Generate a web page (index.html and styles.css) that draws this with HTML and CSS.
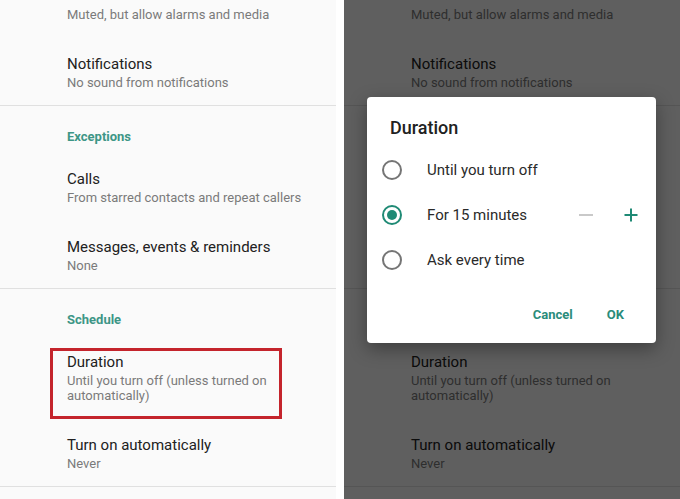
FILE: index.html
```html
<!DOCTYPE html>
<html lang="en">
<head>
<meta charset="utf-8">
<title>Do Not Disturb – Duration</title>
<link rel="stylesheet" href="styles.css">
</head>
<body>
<div class="screen">
  <section class="panel">
    <div class="item item-partial"><div class="sub">Muted, but allow alarms and media</div></div>
    <div class="item"><div class="title">Notifications</div><div class="sub">No sound from notifications</div></div>
    <div class="divider"></div>
    <div class="header">Exceptions</div>
    <div class="item"><div class="title">Calls</div><div class="sub">From starred contacts and repeat callers</div></div>
    <div class="item"><div class="title">Messages, events &amp; reminders</div><div class="sub">None</div></div>
    <div class="divider"></div>
    <div class="header">Schedule</div>
    <div class="item item-marked"><div class="title">Duration</div><div class="sub">Until you turn off (unless turned on automatically)</div></div>
    <div class="item"><div class="title">Turn on automatically</div><div class="sub">Never</div></div>
    <div class="divider"></div>
  </section>

  <section class="panel panel-dimmed">
    <div class="item item-partial"><div class="sub">Muted, but allow alarms and media</div></div>
    <div class="item"><div class="title">Notifications</div><div class="sub">No sound from notifications</div></div>
    <div class="divider"></div>
    <div class="header covered">Exceptions</div>
    <div class="item covered"><div class="title">Calls</div><div class="sub">From starred contacts and repeat callers</div></div>
    <div class="item covered"><div class="title">Messages, events &amp; reminders</div><div class="sub">None</div></div>
    <div class="divider"></div>
    <div class="header covered">Schedule</div>
    <div class="item"><div class="title">Duration</div><div class="sub">Until you turn off (unless turned on automatically)</div></div>
    <div class="item"><div class="title">Turn on automatically</div><div class="sub">Never</div></div>
    <div class="divider"></div>

    <div class="dialog">
      <div class="dialog-title">Duration</div>
      <div class="option"><span class="radio"></span><span class="option-label">Until you turn off</span></div>
      <div class="option"><span class="radio radio-on"></span><span class="option-label">For 15 minutes</span>
        <div class="stepper">
          <svg class="step" viewBox="0 0 24 24" width="24" height="24"><path d="M5 12h14" stroke="#c9c9c9" stroke-width="2" fill="none"/></svg>
          <svg class="step" viewBox="0 0 24 24" width="24" height="24"><path d="M5.5 12h13M12 5.5v13" stroke="#1f8a75" stroke-width="2" fill="none"/></svg>
        </div>
      </div>
      <div class="option"><span class="radio"></span><span class="option-label">Ask every time</span></div>
      <div class="actions"><span class="btn">Cancel</span><span class="btn">OK</span></div>
    </div>
  </section>
</div>
</body>
</html>
```

FILE: styles.css
```css
* { box-sizing: border-box; }

body {
  margin: 0;
  background: #ffffff;
  font-family: Roboto, "Noto Sans", "Liberation Sans", sans-serif;
}

.screen {
  display: flex;
  gap: 8px;
  width: 680px;
  height: 499px;
  overflow: hidden;
}

.panel {
  position: relative;
  width: 336px;
  height: 499px;
  flex: none;
  background: #fafafa;
  overflow: hidden;
}

.item {
  position: relative;
  padding: 16px 24px 15px 67px;
}

.item-partial {
  padding-top: 7px;
  padding-bottom: 15px;
}

.title {
  font-size: 15px;
  line-height: 22px;
  color: #212121;
}

.sub {
  font-size: 13px;
  line-height: 15px;
  color: #7a7a7a;
}

.divider {
  height: 1px;
  background: #e0e0e0;
}

.header {
  padding: 23px 0 7px 67px;
  font-size: 13px;
  line-height: 16px;
  font-weight: 700;
  color: #3d9686;
}

.covered {
  visibility: hidden;
}

.item-marked::after {
  content: "";
  position: absolute;
  left: 50px;
  top: 13px;
  width: 226px;
  height: 65px;
  border: 3px solid #c4242c;
}

.panel-dimmed::before {
  content: "";
  position: absolute;
  inset: 0;
  background: rgba(0, 0, 0, 0.62);
  z-index: 1;
}

.dialog {
  position: absolute;
  left: 23px;
  top: 97px;
  width: 289px;
  height: 246px;
  z-index: 2;
  background: #ffffff;
  border-radius: 4px;
  box-shadow: 0 6px 18px rgba(0, 0, 0, 0.35);
  padding-top: 20px;
  display: flex;
  flex-direction: column;
}

.dialog-title {
  padding-left: 23px;
  margin-bottom: 8px;
  font-size: 18px;
  line-height: 22px;
  font-weight: 500;
  color: #212121;
}

.option {
  height: 45px;
  display: flex;
  align-items: center;
  padding-left: 15px;
}

.radio {
  width: 20px;
  height: 20px;
  flex: none;
  border: 2px solid #757575;
  border-radius: 50%;
  margin-right: 25px;
  display: flex;
  align-items: center;
  justify-content: center;
}

.radio-on {
  border-color: #1f8a75;
}

.radio-on::after {
  content: "";
  width: 10px;
  height: 10px;
  border-radius: 50%;
  background: #1f8a75;
}

.option-label {
  font-size: 15px;
  color: #2a2a2a;
}

.stepper {
  margin-left: auto;
  display: flex;
  gap: 21px;
  padding-right: 13px;
}

.step {
  display: block;
}

.actions {
  display: flex;
  justify-content: flex-end;
  gap: 34px;
  padding: 23px 32px 0 0;
}

.btn {
  font-size: 13px;
  line-height: 20px;
  font-weight: 700;
  color: #2a8c7b;
}
```
